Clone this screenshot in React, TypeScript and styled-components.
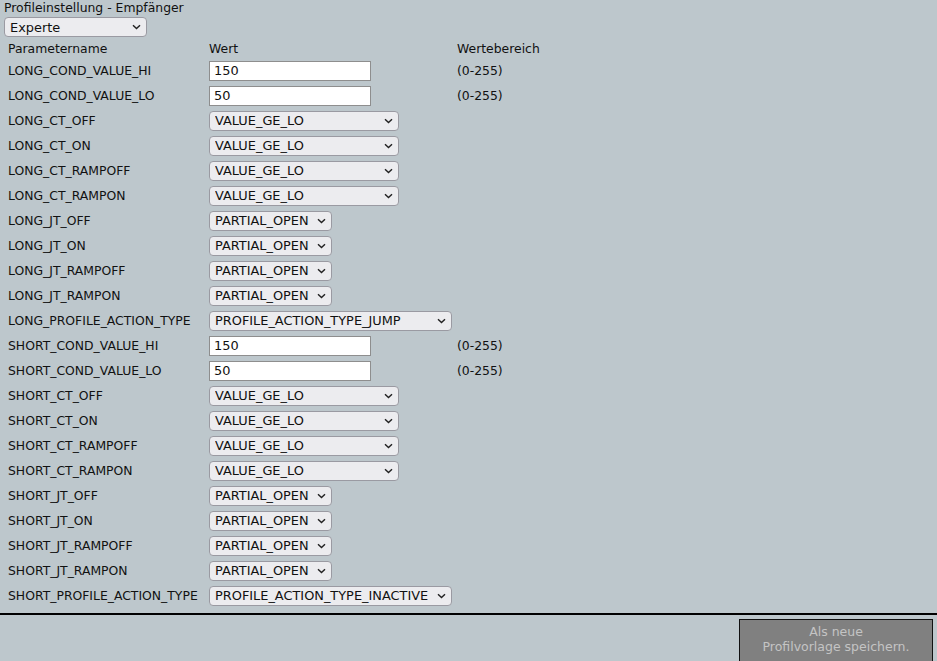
import React from 'react';
import styled, { createGlobalStyle } from 'styled-components';

const GlobalStyle = createGlobalStyle`
    html, body {
        margin: 0;
        padding: 0;
        background: #bdc7cc;
    }
    body {
        font-family: "DejaVu Sans", Verdana, sans-serif;
        font-size: 12.4px;
        color: #111;
    }
`;

const SPage = styled.div`
    min-height: 661px;
    display: flex;
    flex-direction: column;
`;

const STitle = styled.div`
    padding-left: 4px;
    line-height: 15px;
`;

const SModeRow = styled.div`
    padding: 2px 0 0 4px;
    display: flex;
`;

const SSelectWrap = styled.div`
    position: relative;
    display: inline-flex;
`;

const SSelect = styled.select<{ $width: number }>`
    appearance: none;
    box-sizing: border-box;
    width: ${({ $width }) => $width}px;
    height: 20px;
    padding: 0 20px 0 5px;
    font-family: inherit;
    font-size: 12.9px;
    color: #111;
    background: #ececef;
    border: 1px solid #9a9aa2;
    border-radius: 4px;
    outline: none;
`;

const SChevron = styled.svg`
    position: absolute;
    right: 6px;
    top: 7px;
    width: 9px;
    height: 6px;
    pointer-events: none;
`;

const STable = styled.div`
    display: grid;
    grid-template-columns: 201px 248px 1fr;
    padding: 1px 0 0 8px;
`;

const SHeadCell = styled.div`
    height: 20px;
    display: flex;
    align-items: center;
`;

const SCell = styled.div`
    height: 25px;
    display: flex;
    align-items: center;
    white-space: nowrap;
`;

const SInput = styled.input`
    box-sizing: border-box;
    width: 162px;
    height: 20px;
    padding: 0 4px;
    font-family: inherit;
    font-size: 12.9px;
    color: #111;
    background: #fff;
    border: 1px solid #8e8e8e;
    outline: none;
`;

const SFooter = styled.div`
    margin-top: 5px;
    border-top: 2px solid #000;
    flex: 1;
    display: flex;
    justify-content: flex-end;
    padding: 4px 4px 0 0;
`;

const SSaveButton = styled.button`
    width: 194px;
    height: 48px;
    padding: 4px 0 0;
    align-self: flex-start;
    font-family: inherit;
    font-size: 12.5px;
    line-height: 15px;
    color: #c4c4c4;
    background: #808080;
    border: 1px solid #111;
    border-bottom: none;
    display: flex;
    flex-direction: column;
    align-items: center;
    justify-content: flex-start;
`;

const Dropdown = ({ value, width, options }: { value: string; width: number; options?: string[] }) => (
    <SSelectWrap>
        <SSelect $width={width} defaultValue={value}>
            {(options ?? [value]).map((o) => (
                <option key={o}>{o}</option>
            ))}
        </SSelect>
        <SChevron viewBox="0 0 9 6">
            <path d="M1 1.2 L4.5 4.6 L8 1.2" fill="none" stroke="#222" strokeWidth="1.4" />
        </SChevron>
    </SSelectWrap>
);

type Param =
    | { name: string; kind: 'input'; value: string; range: string }
    | { name: string; kind: 'select'; value: string; width: number };

const ct = 'VALUE_GE_LO';
const jt = 'PARTIAL_OPEN';

const buildParams = (prefix: string, action: string): Param[] => [
    { name: `${prefix}_COND_VALUE_HI`, kind: 'input', value: '150', range: '(0-255)' },
    { name: `${prefix}_COND_VALUE_LO`, kind: 'input', value: '50', range: '(0-255)' },
    { name: `${prefix}_CT_OFF`, kind: 'select', value: ct, width: 190 },
    { name: `${prefix}_CT_ON`, kind: 'select', value: ct, width: 190 },
    { name: `${prefix}_CT_RAMPOFF`, kind: 'select', value: ct, width: 190 },
    { name: `${prefix}_CT_RAMPON`, kind: 'select', value: ct, width: 190 },
    { name: `${prefix}_JT_OFF`, kind: 'select', value: jt, width: 123 },
    { name: `${prefix}_JT_ON`, kind: 'select', value: jt, width: 123 },
    { name: `${prefix}_JT_RAMPOFF`, kind: 'select', value: jt, width: 123 },
    { name: `${prefix}_JT_RAMPON`, kind: 'select', value: jt, width: 123 },
    { name: `${prefix}_PROFILE_ACTION_TYPE`, kind: 'select', value: action, width: 243 },
];

const params: Param[] = [
    ...buildParams('LONG', 'PROFILE_ACTION_TYPE_JUMP'),
    ...buildParams('SHORT', 'PROFILE_ACTION_TYPE_INACTIVE'),
];

export default function App() {
    return (
        <SPage>
            <GlobalStyle />
            <STitle>Profileinstellung - Empfänger</STitle>
            <SModeRow>
                <Dropdown value="Experte" width={143} options={['Standard', 'Experte']} />
            </SModeRow>
            <STable>
                <SHeadCell>Parametername</SHeadCell>
                <SHeadCell>Wert</SHeadCell>
                <SHeadCell>Wertebereich</SHeadCell>
                {params.map((p) => (
                    <React.Fragment key={p.name}>
                        <SCell>{p.name}</SCell>
                        <SCell>
                            {p.kind === 'input' ? (
                                <SInput defaultValue={p.value} />
                            ) : (
                                <Dropdown value={p.value} width={p.width} />
                            )}
                        </SCell>
                        <SCell>{p.kind === 'input' ? p.range : ''}</SCell>
                    </React.Fragment>
                ))}
            </STable>
            <SFooter>
                <SSaveButton type="button">
                    <span>Als neue</span>
                    <span>Profilvorlage speichern.</span>
                </SSaveButton>
            </SFooter>
        </SPage>
    );
}
